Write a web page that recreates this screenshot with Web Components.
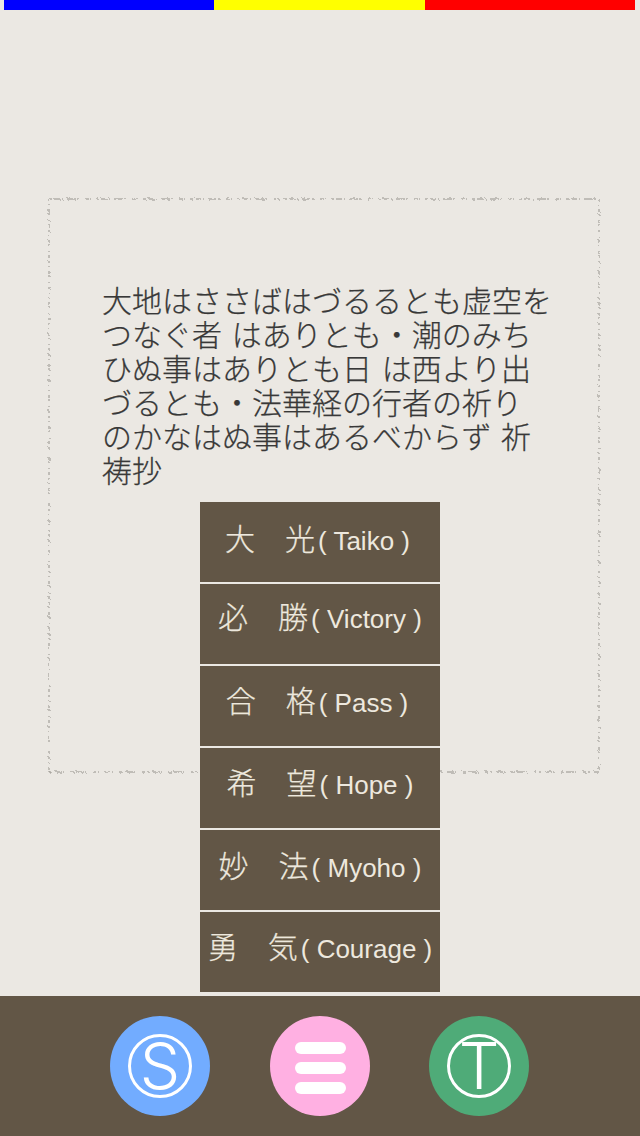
<!DOCTYPE html>
<html lang="ja">
<head>
<meta charset="utf-8">
<title>Prayer</title>
<style>
  html,body{margin:0;padding:0;background:#ebe8e3;}
</style>
</head>
<body>
<prayer-page>
  <color-bar slot="top"></color-bar>
  <rough-frame>
    <quote-text>大地はささばはづるるとも虚空を<br>つなぐ者 はありとも・潮のみち<br>ひぬ事はありとも日 は西より出<br>づるとも・法華経の行者の祈り<br>のかなはぬ事はあるべからず 祈<br>祷抄</quote-text>
    <prayer-list>
      <prayer-item name="大　光" en="( Taiko )" style="--shift:2px;--nudge:5px"></prayer-item>
      <prayer-item name="必　勝" en="( Victory )" style="--shift:-2px"></prayer-item>
      <prayer-item name="合　格" en="( Pass )" style="--nudge:6px"></prayer-item>
      <prayer-item name="希　望" en="( Hope )"></prayer-item>
      <prayer-item name="妙　法" en="( Myoho )" style="--shift:1px"></prayer-item>
      <prayer-item name="勇　気" en="( Courage )"></prayer-item>
    </prayer-list>
  </rough-frame>
  <bottom-nav slot="bottom">
    <round-button color="#72acff"><ring-letter>S</ring-letter></round-button>
    <round-button color="#ffb0e2"><menu-bars></menu-bars></round-button>
    <round-button color="#4fab78"><ring-letter>T</ring-letter></round-button>
  </bottom-nav>
</prayer-page>

<script>
const cjk = '"Liberation Sans","Noto Sans CJK JP",sans-serif';

class PrayerPage extends HTMLElement{
  constructor(){
    super();
    this.attachShadow({mode:'open'}).innerHTML = `
      <style>
        :host{display:flex;flex-direction:column;width:640px;height:1136px;background:#ebe8e3;overflow:hidden;font-family:${cjk};}
        main{flex:1;min-height:0;padding:188px 40px 0 48px;}
      </style>
      <slot name="top"></slot>
      <main><slot></slot></main>
      <slot name="bottom"></slot>`;
  }
}

class ColorBar extends HTMLElement{
  constructor(){
    super();
    this.attachShadow({mode:'open'}).innerHTML = `
      <style>
        :host{display:flex;height:10px;padding:0 5px 0 4px;flex:none;}
        div{flex:1;}
      </style>
      <div style="background:#0000ff"></div>
      <div style="background:#ffff00"></div>
      <div style="background:#ff0000"></div>`;
  }
}

class RoughFrame extends HTMLElement{
  constructor(){
    super();
    this.attachShadow({mode:'open'}).innerHTML = `
      <style>
        :host{display:block;position:relative;width:552px;height:574px;}
        svg{position:absolute;left:-6px;top:-6px;width:564px;height:586px;}
        .content{position:relative;box-sizing:border-box;padding:84px 0 0 54px;}
      </style>
      <svg viewBox="0 0 564 586">
        <defs>
          <filter id="rough" x="-5%" y="-5%" width="110%" height="110%">
            <feTurbulence type="fractalNoise" baseFrequency="0.3" numOctaves="3" seed="7"/>
            <feDisplacementMap in="SourceGraphic" scale="3.5"/>
            <feGaussianBlur stdDeviation="0.5"/>
          </filter>
        </defs>
        <g filter="url(#rough)" fill="none" stroke="#94918b" stroke-width="1">
          <path d="M7 7H557" stroke-dasharray="3 2 6 2 1 4 9 1 2 6 4 1 1 5"/>
          <path d="M7 580H557" stroke-dasharray="2 4 7 1 1 6 4 2 8 1 1 7 3 2"/>
          <path d="M7 7V580" stroke-dasharray="2 3 1 4 3 1 2 5 1 3 3 3"/>
          <path d="M557 7V580" stroke-dasharray="2 4 1 3 3 2 1 5 3 1 2 4"/>
        </g>
      </svg>
      <div class="content"><slot></slot></div>`;
  }
}

class QuoteText extends HTMLElement{
  constructor(){
    super();
    this.attachShadow({mode:'open'}).innerHTML = `
      <style>
        :host{display:block;font-family:"Noto Sans CJK JP",sans-serif;font-weight:300;font-size:30px;line-height:34px;word-spacing:3px;color:#383838;-webkit-text-stroke:.25px #383838;white-space:nowrap;}
      </style>
      <slot></slot>`;
  }
}

class PrayerList extends HTMLElement{
  constructor(){
    super();
    this.attachShadow({mode:'open'}).innerHTML = `
      <style>
        :host{display:flex;flex-direction:column;gap:2px;width:240px;margin:16px 0 0 98px;}
      </style>
      <slot></slot>`;
  }
}

class PrayerItem extends HTMLElement{
  constructor(){
    super();
    this.attachShadow({mode:'open'}).innerHTML = `
      <style>
        :host{display:block;height:80px;background:#625646;color:#ede8de;cursor:pointer;}
        .row{display:flex;justify-content:center;align-items:baseline;height:100%;box-sizing:border-box;padding-top:calc(11px + var(--shift,0px));padding-right:var(--nudge,0px);white-space:nowrap;}
        .ja{font-family:"Noto Sans CJK JP",sans-serif;font-weight:300;font-size:30px;line-height:44px;-webkit-text-stroke:.25px #ede8de;}
        .en{font-family:"Liberation Sans",sans-serif;font-size:26px;line-height:44px;margin-left:3px;}
      </style>
      <div class="row"><span class="ja"></span><span class="en"></span></div>`;
  }
  connectedCallback(){
    this.shadowRoot.querySelector('.ja').textContent = this.getAttribute('name');
    this.shadowRoot.querySelector('.en').textContent = this.getAttribute('en');
  }
}

class BottomNav extends HTMLElement{
  constructor(){
    super();
    this.attachShadow({mode:'open'}).innerHTML = `
      <style>
        :host{display:flex;flex:none;height:140px;box-sizing:border-box;background:#625646;padding:20px 0 0 110px;gap:59.5px;}
      </style>
      <slot></slot>`;
  }
}

class RoundButton extends HTMLElement{
  constructor(){
    super();
    this.attachShadow({mode:'open'}).innerHTML = `
      <style>
        :host{display:flex;align-items:center;justify-content:center;width:100px;height:100px;border-radius:50%;cursor:pointer;}
      </style>
      <slot></slot>`;
  }
  connectedCallback(){
    this.style.background = this.getAttribute('color');
  }
}

class RingLetter extends HTMLElement{
  constructor(){
    super();
    this.attachShadow({mode:'open'}).innerHTML = `
      <style>
        :host{display:flex;align-items:center;justify-content:center;box-sizing:border-box;width:64px;height:64px;border:3px solid #fff;border-radius:50%;color:#fff;font-family:Inter,"Liberation Sans",sans-serif;font-weight:300;font-size:64px;line-height:1;}
      </style>
      <slot></slot>`;
  }
}

class MenuBars extends HTMLElement{
  constructor(){
    super();
    this.attachShadow({mode:'open'}).innerHTML = `
      <style>
        :host{display:flex;flex-direction:column;gap:8px;width:51px;padding:4px 0 0 1px;}
        i{display:block;height:12px;border-radius:6px;background:#fff;}
      </style>
      <i></i><i></i><i></i>`;
  }
}

customElements.define('prayer-page', PrayerPage);
customElements.define('color-bar', ColorBar);
customElements.define('rough-frame', RoughFrame);
customElements.define('quote-text', QuoteText);
customElements.define('prayer-list', PrayerList);
customElements.define('prayer-item', PrayerItem);
customElements.define('bottom-nav', BottomNav);
customElements.define('round-button', RoundButton);
customElements.define('ring-letter', RingLetter);
customElements.define('menu-bars', MenuBars);
</script>
</body>
</html>
